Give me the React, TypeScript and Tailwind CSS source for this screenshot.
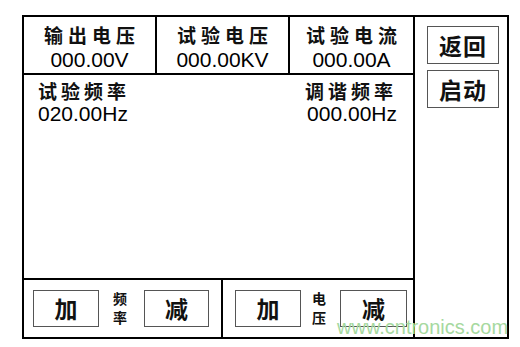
import React from "react";

const cjk = { fontFamily: '"Noto Sans CJK SC", "Liberation Sans", sans-serif' };
const num = { fontFamily: '"Liberation Sans", Arial, sans-serif' };

const ReadCell: React.FC<{ label: string; value: string; className: string }> = ({ label, value, className }) => (
  <div className={`flex flex-col items-center ${className}`}>
    <div style={cjk} className="mt-[6px] text-[19px] leading-[24px] tracking-[5px] pl-[5px] font-bold text-[#111]">
      {label}
    </div>
    <div style={num} className="mt-[2px] text-[21px] leading-[22px] text-black">
      {value}
    </div>
  </div>
);

const KeyBtn: React.FC<{ text: string; className?: string }> = ({ text, className = "" }) => (
  <div
    style={cjk}
    className={`h-[37px] flex items-center justify-center border border-[#555] bg-white text-[23px] font-bold text-[#111] ${className}`}
  >
    {text}
  </div>
);

const SmallTag: React.FC<{ top: string; bottom: string; className?: string }> = ({ top, bottom, className = "" }) => (
  <div style={cjk} className={`flex flex-col items-center text-[14px] leading-[19px] font-bold text-[#111] ${className}`}>
    <span>{top}</span>
    <span>{bottom}</span>
  </div>
);

export default function App() {
  return (
    <div className="relative w-[520px] h-[347px] bg-white overflow-hidden">
      <div className="ml-[22px] mt-[15px] w-[487px] h-[324px] border-2 border-black flex">
        {/* left panel */}
        <div className="w-[391px] flex flex-col border-r-2 border-black">
          <div className="h-[58px] flex border-b-2 border-black">
            <ReadCell label="输出电压" value="000.00V" className="w-[133px] border-r-2 border-black" />
            <ReadCell label="试验电压" value="000.00KV" className="w-[133px] border-r-2 border-black" />
            <ReadCell label="试验电流" value="000.00A" className="flex-1" />
          </div>
          <div className="flex-1 flex justify-between px-[14px] pt-[4px]">
            <div className="flex flex-col">
              <span style={cjk} className="text-[19px] leading-[24px] tracking-[4px] font-bold text-[#111]">试验频率</span>
              <span style={num} className="text-[21px] leading-[22px]">020.00Hz</span>
            </div>
            <div className="flex flex-col items-end pr-[2px]">
              <span style={cjk} className="text-[19px] leading-[24px] tracking-[4px] font-bold text-[#111]">调谐频率</span>
              <span style={num} className="text-[21px] leading-[22px]">000.00Hz</span>
            </div>
          </div>
          <div className="h-[59px] flex border-t-2 border-black">
            <div className="w-[199px] flex items-start pt-[10px] border-r-2 border-black">
              <KeyBtn text="加" className="ml-[9px] w-[66px]" />
              <SmallTag top="频" bottom="率" className="ml-[14px] mt-[-1px]" />
              <KeyBtn text="减" className="ml-[17px] w-[65px]" />
            </div>
            <div className="flex-1 flex items-start pt-[10px]">
              <KeyBtn text="加" className="ml-[12px] w-[66px]" />
              <SmallTag top="电" bottom="压" className="ml-[11px] mt-[-1px]" />
              <KeyBtn text="减" className="ml-[14px] w-[67px]" />
            </div>
          </div>
        </div>
        {/* right panel */}
        <div className="flex-1 flex flex-col pl-[12px] pt-[9px] gap-[6px]">
          <KeyBtn text="返回" className="w-[72px] h-[38px] text-[22px] tracking-[1px]" />
          <KeyBtn text="启动" className="w-[72px] h-[38px] text-[22px] tracking-[1px]" />
        </div>
      </div>
      <div style={num} className="absolute left-[337px] top-[317px] text-[20px] leading-[20px] text-[#a6d9a0]">
        www.cntronics.com
      </div>
    </div>
  );
}
